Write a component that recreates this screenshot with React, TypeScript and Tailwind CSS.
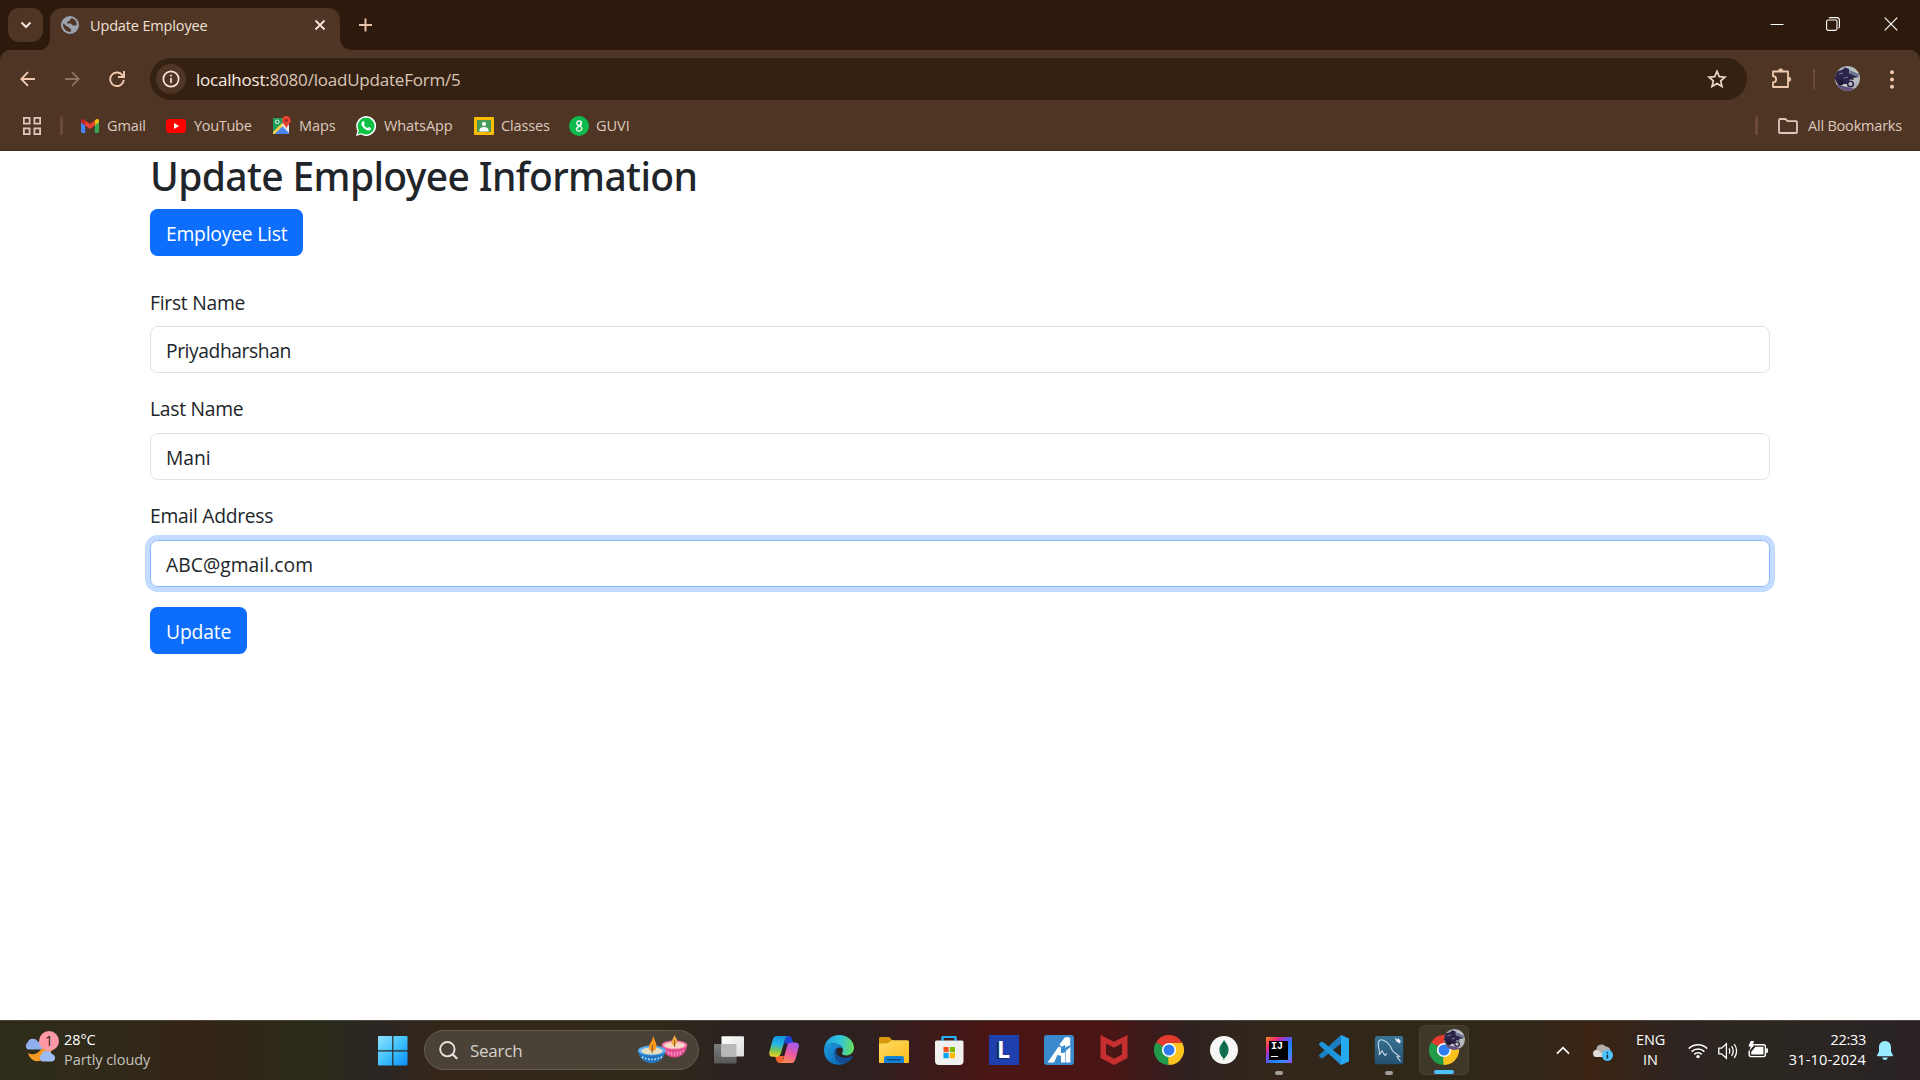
import React from "react";

type IconProps = { className?: string };

/* ---------- Browser icons ---------- */

const Globe = () => (
  <svg className="size-[18px]" viewBox="0 0 18 18">
    <circle cx="9" cy="9" r="9" fill="#9aa3ae" />
    <path
      d="M2 7.2 C1.6 12 5 16 9.4 16 L10.2 14 C10.2 12.6 8.6 12.6 8.2 11.8 C8 10.8 6 11 5.4 10 C4.6 8.8 3.2 8.2 2 7.2 Z M11 2.2 C9 2.6 8.6 4 8.8 5 L6.4 5.6 L6 7.4 L10 7.6 L12 9.4 L15.4 9.6 C16.4 6.4 14.4 3.2 11 2.2 Z"
      fill="#4e3524"
    />
  </svg>
);

const Gmail = () => (
  <svg className="h-[14px] w-[18px]" viewBox="0 0 18 14">
    <path d="M0 2 V12.6 Q0 14 1.4 14 H4.2 V6.2 Z" fill="#4285f4" />
    <path d="M18 2 V12.6 Q18 14 16.6 14 H13.8 V6.2 Z" fill="#34a853" />
    <path d="M13.8 1.6 V6.4 L18 3.3 V1.8 C18 0 16 -.5 14.8.6 Z" fill="#fbbc04" />
    <path d="M4.2 1.6 V6.4 L0 3.3 V1.8 C0 0 2 -.5 3.2.6 Z" fill="#c5221f" />
    <path d="M4.2 1.4 V6.4 L9 10 L13.8 6.4 V1.4 L9 5 Z" fill="#ea4335" />
  </svg>
);

const YouTube = () => (
  <svg className="h-[14px] w-5" viewBox="0 0 20 14">
    <rect width="20" height="14" rx="3.4" fill="#f00" />
    <path d="M8 4 L13 7 L8 10 Z" fill="#fff" />
  </svg>
);

const Maps = () => (
  <svg className="h-[19px] w-[18px]" viewBox="0 0 18 19">
    <path d="M1.2 2 H12 L16 6 V18 H1.2 Q0 18 0 17 V3 Q0 2 1.2 2 Z" fill="#dfe3e6" />
    <path d="M1.2 2 H11 L10 8 L0 17 V3 Q0 2 1.2 2 Z" fill="#1e9e5a" />
    <path d="M1 18 L9 10 L16 17 V18 Z" fill="#4a86f0" />
    <path d="M0 16 L9 7 L11 9 L1.6 18 H0 Z" fill="#fbd14a" />
    <path d="M9 9 L16 16 V10 L12 7 Z" fill="#e8eaed" />
    <circle cx="4.2" cy="5.8" r="1.8" fill="none" stroke="#fff" strokeWidth=".9" />
    <path d="M13.4 0 A4.4 4.4 0 0 0 9 4.4 C9 7.4 12.4 8.6 13.4 12.6 C14.4 8.6 17.8 7.4 17.8 4.4 A4.4 4.4 0 0 0 13.4 0 Z" fill="#ea4335" />
    <circle cx="13.4" cy="4.4" r="1.6" fill="#9b2a20" />
  </svg>
);

const WhatsApp = () => (
  <svg className="size-5" viewBox="0 0 20 20">
    <path d="M0 20 L1.4 14.8 A10 9.9 0 1 1 5.2 18.6 Z" fill="#fff" />
    <path d="M1.9 18.1 L2.9 14.5 A8.4 8.4 0 1 1 5.6 17.2 Z" fill="#0cc143" />
    <path d="M6.9 5.2 C7.4 5 7.8 5.1 8 5.6 L8.7 7.2 C8.9 7.7 8.1 8.3 7.9 8.7 C8.6 10.2 9.9 11.4 11.5 12.1 C12 11.8 12.5 10.8 13 11 L14.8 11.9 C15.4 12.3 14.7 13.7 14.1 14.1 C12.9 14.9 11 14.4 9.2 13.2 C7.5 12.1 5.9 10 5.5 8.4 C5.2 7.1 6 5.6 6.9 5.2 Z" fill="#fff" />
  </svg>
);

const Classroom = () => (
  <svg className="h-[18px] w-5" viewBox="0 0 20 18">
    <rect width="20" height="18" rx="1" fill="#fbbc04" />
    <rect x="3" y="3" width="14" height="12" fill="#4a9a5b" />
    <circle cx="10" cy="7" r="2" fill="#fff" />
    <path d="M5.4 14.4 V13 C5.4 11 8 10 10 10 S14.6 11 14.6 13 V14.4 Z" fill="#fff" />
    <rect x="11" y="15" width="4" height="1.4" fill="#e8a000" />
  </svg>
);

const Guvi = () => (
  <svg className="size-5" viewBox="0 0 20 20" fill="none">
    <circle cx="10" cy="10" r="10" fill="#0fba4c" />
    <circle cx="10" cy="7" r="2.2" stroke="#fff" strokeWidth="1.3" />
    <path d="M12.2 5.6 V8 C12.2 9.8 10.6 10.2 8.6 10.2 M10.6 10.4 C12.8 10.8 13.2 12 12.6 13.4 C11.9 15.7 8 15.7 7.4 13.2 C7.2 12 8 11.4 9.2 11.8" stroke="#fff" strokeWidth="1.3" strokeLinecap="round" />
  </svg>
);

const Biker = ({ className }: IconProps) => (
  <svg className={className} viewBox="0 0 25 25">
    <defs>
      <clipPath id="avatarClip"><circle cx="12.5" cy="12.5" r="12.5" /></clipPath>
      <linearGradient id="avatarSky" x1="0" y1="0" x2="1" y2="1">
        <stop offset="0" stopColor="#9aa3b4" />
        <stop offset=".6" stopColor="#c3cac6" />
        <stop offset="1" stopColor="#9d9aa8" />
      </linearGradient>
    </defs>
    <g clipPath="url(#avatarClip)">
      <rect width="25" height="25" fill="url(#avatarSky)" />
      <path d="M0 18 L8 20 L20 23 V25 H0 Z" fill="#66527f" />
      <path d="M0 6 L7 4 L10 1.5 L14 3 L14 7 L19 9 L24 11 L18 12 L19 14 L15 13.5 L12 18 L7 18 L2 17 L0 13 Z" fill="#2c2348" />
      <path d="M14 4 L24 8 L23 11 L15 8 Z" fill="#6b7290" />
      <circle cx="5.5" cy="16.5" r="3" fill="#1e1934" />
      <circle cx="15.5" cy="18" r="2.8" fill="none" stroke="#2c2348" strokeWidth="1.5" />
      <path d="M4 8 L8 7 M9 12 L13 11" stroke="#77779a" strokeWidth="1.2" />
    </g>
  </svg>
);

/* ---------- Browser chrome ---------- */

const bookmarks = [
  { label: "Gmail", icon: <Gmail />, cls: "w-[85px] gap-[8px]", text: "tracking-[-0.1px]" },
  { label: "YouTube", icon: <YouTube />, cls: "w-[107px] gap-[8px]", text: "tracking-[-0.3px]" },
  { label: "Maps", icon: <Maps />, cls: "w-[83px] gap-[8px]", text: "tracking-[-0.1px]" },
  { label: "WhatsApp", icon: <WhatsApp />, cls: "w-[118px] gap-[8px]", text: "tracking-[-0.1px]" },
  { label: "Classes", icon: <Classroom />, cls: "w-[95px] gap-[7px]", text: "tracking-[-0.15px]" },
  { label: "GUVI", icon: <Guvi />, cls: "gap-[7px]", text: "" },
];

function TabStrip() {
  return (
    <div className="flex h-[50px] bg-[#2e1a0c]">
      <div className="ml-2 mt-2 flex h-[34px] w-[35px] items-center justify-center rounded-[11px] bg-[#4e3524]">
        <svg className="size-[12px]" viewBox="0 0 12 12" fill="none" stroke="#f5e5db" strokeWidth="2">
          <path d="M1.5 3.5 L6 8 L10.5 3.5" />
        </svg>
      </div>
      <svg className="mt-[38px] h-3 w-[7px]" viewBox="0 0 7 12">
        <path d="M7 0 V12 H0 V11.4 C4 10 7 5 7 0 Z" fill="#4e3524" />
      </svg>
      <div className="mt-2 flex h-[42px] w-[290px] items-center rounded-t-[12px] bg-[#4e3524] pb-[8px] pl-[11px] pr-[14px]">
        <Globe />
        <span className="ml-[11px] flex-1 pt-[2px] text-[14.5px] leading-5 tracking-[-0.15px] text-[#f0e0d6]">Update Employee</span>
        <svg className="size-[12px]" viewBox="0 0 12 12" stroke="#f5e5db" strokeWidth="1.8">
          <path d="M1.5 1.5 L10.5 10.5 M10.5 1.5 L1.5 10.5" />
        </svg>
      </div>
      <svg className="mt-[38px] size-3" viewBox="0 0 12 12">
        <path d="M0 0 V12 H12 C5 12 0 7 0 0 Z" fill="#4e3524" />
      </svg>
      <svg className="ml-[6px] mt-[18px] size-[14px]" viewBox="0 0 14 14" stroke="#e9c3a8" strokeWidth="1.9">
        <path d="M7.5 .5 V13.5 M1 7 H14" />
      </svg>
      <div className="flex flex-1 justify-end pr-[22px] pt-[17px] text-white">
        <svg className="mr-[42px] size-[14px]" viewBox="0 0 14 14" stroke="currentColor"><path d="M.5 7.5 H13.5" /></svg>
        <svg className="mr-[44px] size-[14px]" viewBox="0 0 14 14" fill="none" stroke="currentColor" strokeWidth="1.1">
          <rect x=".6" y="3" width="10.4" height="10.4" rx="1.6" />
          <path d="M3 1.2 Q3.6 .6 4.6 .6 H10.6 Q13.4 .6 13.4 3.4 V9.4 Q13.4 10.6 12.6 11.2" />
        </svg>
        <svg className="size-[14px]" viewBox="0 0 14 14" stroke="currentColor" strokeWidth="1.2"><path d="M.7 .7 L13.3 13.3 M13.3 .7 L.7 13.3" /></svg>
      </div>
    </div>
  );
}

function AddressBar() {
  return (
    <div className="flex h-[58px] items-center rounded-t-[10px] bg-[#4e3524]">
      <svg className="ml-5 size-[16px]" viewBox="0 0 16 16" fill="none" stroke="#f0c9ae" strokeWidth="1.8">
        <path d="M15 8 H1.5 M8 1.2 L1.3 8 L8 14.8" />
      </svg>
      <svg className="ml-[28px] size-[16px]" viewBox="0 0 16 16" fill="none" stroke="#8e7261" strokeWidth="1.8">
        <path d="M1 8 H14.5 M8 1.2 L14.7 8 L8 14.8" />
      </svg>
      <svg className="ml-[29px] size-[16px]" viewBox="0 0 16 16" fill="none" stroke="#f0c9ae" strokeWidth="1.9">
        <path d="M14.8 8.8 A6.8 6.8 0 1 1 13 3.6 L14.6 5.6" />
        <path d="M15 0 V6 H9" />
      </svg>
      <div className="ml-[25px] flex h-[42px] w-[1597px] items-center rounded-full bg-[#352111] pl-[6px] pr-[20px]">
        <div className="flex size-[30px] items-center justify-center rounded-full bg-[#4e3524]">
          <svg className="size-[18px]" viewBox="0 0 18 18" fill="none" stroke="#f5e5db" strokeWidth="1.7">
            <circle cx="9" cy="9" r="7.7" />
            <path d="M9 8 V13 M9 4.7 V6.5" />
          </svg>
        </div>
        <span className="ml-[10px] flex-1 pt-[2px] text-[17px] leading-6 tracking-[-0.21px] text-[#d8c5b8]">
          <span className="text-[#f8ebe2]">localhost:</span>8080/loadUpdateForm/5
        </span>
        <svg className="size-[20px]" viewBox="0 0 20 20" fill="none" stroke="#ead6c8" strokeWidth="1.7">
          <path d="M10 2.4 L12.3 7.6 L18 8.1 L13.7 11.9 L15 17.5 L10 14.5 L5 17.5 L6.3 11.9 L2 8.1 L7.7 7.6 Z" />
        </svg>
      </div>
      <svg className="ml-[24px] size-[22px]" viewBox="0 0 22 22" fill="none" stroke="#f0c9ae" strokeWidth="1.8" strokeLinejoin="round">
        <path d="M2 3.5 H17 V19 H2 V14.5 C6.2 14.2 6.2 8.4 2 8 Z" />
        <path d="M7.4 3 A2.3 2.3 0 0 1 12 3 Z M17.6 9 A2.3 2.3 0 0 1 17.6 13.6 Z" fill="#f0c9ae" strokeWidth=".6" />
      </svg>
      <div className="ml-[20px] h-5 w-[2px] bg-[#6b4b36]" />
      <Biker className="mb-[2px] ml-[20px] size-[25px]" />
      <svg className="ml-[30px] h-[19px] w-1" viewBox="0 0 4 19" fill="#f0c9ae">
        <circle cx="2" cy="2.2" r="2" /><circle cx="2" cy="9.5" r="2" /><circle cx="2" cy="16.8" r="2" />
      </svg>
    </div>
  );
}

function BookmarkBar() {
  return (
    <div className="flex h-[43px] items-center border-b border-[#442c1c] bg-[#4e3524] pb-[7px] text-[14.5px] leading-5 text-[#dccabe]">
      <svg className="ml-[23px] size-[18px]" viewBox="0 0 18 18" fill="none" stroke="#dcc8bb" strokeWidth="1.8">
        <rect x=".9" y=".9" width="5.7" height="5.7" /><rect x="11.4" y=".9" width="5.7" height="5.7" />
        <rect x=".9" y="11.4" width="5.7" height="5.7" /><rect x="11.4" y="11.4" width="5.7" height="5.7" />
      </svg>
      <div className="ml-[19px] mr-[18px] h-[19px] w-[3px] rounded bg-[#6b4b36]" />
      {bookmarks.map((b) => (
        <div key={b.label} className={`flex shrink-0 items-center ${b.cls}`}>
          {b.icon}
          <span className={b.text}>{b.label}</span>
        </div>
      ))}
      <div className="ml-auto mr-[20px] h-[19px] w-[3px] rounded bg-[#6b4b36]" />
      <svg className="h-4 w-5" viewBox="0 0 20 16" fill="none" stroke="#dcc8bb" strokeWidth="1.8" strokeLinejoin="round">
        <path d="M1 2 Q1 1 2 1 H7.4 L9.6 3.2 H18 Q19 3.2 19 4.2 V14 Q19 15 18 15 H2 Q1 15 1 14 Z" />
      </svg>
      <span className="ml-[10px] mr-[18px] tracking-[-0.2px]">All Bookmarks</span>
    </div>
  );
}

/* ---------- Page ---------- */

const inputBase = "flex h-[47px] items-center rounded-[7.5px] border px-[15px] pt-[2px]";
const button = "flex h-[47px] items-center rounded-[7.5px] bg-[#0d6efd] pl-4 pt-[2px] text-white";

function Page() {
  return (
    <main className="h-[869px] bg-white px-[150px] text-[19.25px] leading-[30px] text-[#212529]">
      <h1 className="h-[58px] pt-px font-['Noto_Sans'] text-[39px] font-medium leading-[48px] tracking-[-0.63px]">Update Employee Information</h1>
      <button className={`${button} w-[153px] tracking-[-0.2px]`}>Employee List</button>
      <div className="pb-[8px] pt-[32px] tracking-[-0.25px]">First Name</div>
      <div className={`${inputBase} border-[#dee2e6] tracking-[-0.42px]`}>Priyadharshan</div>
      <div className="pb-[9px] pt-[21px] tracking-[-0.25px]">Last Name</div>
      <div className={`${inputBase} border-[#dee2e6]`}>Mani</div>
      <div className="pb-[9px] pt-[21px] tracking-[-0.27px]">Email Address</div>
      <div className={`${inputBase} border-[#86b7fe] tracking-[0.05px] shadow-[0_0_0_5px_#c2dbfe]`}>ABC@gmail.com</div>
      <button className={`${button} mt-5 w-[97px] tracking-[-0.12px]`}>Update</button>
    </main>
  );
}

/* ---------- Taskbar icons ---------- */

const Windows = () => (
  <svg className="size-[30px]" viewBox="0 0 30 30">
    <defs>
      <linearGradient id="win" x1="0" y1="0" x2="1" y2="1">
        <stop offset="0" stopColor="#8fe3ff" /><stop offset=".5" stopColor="#41c2fb" /><stop offset="1" stopColor="#0a8df5" />
      </linearGradient>
    </defs>
    <path d="M0 1 Q0 0 1 0 H14.2 V14.2 H0 Z M15.4 0 H28.5 Q29.5 0 29.5 1 V14.2 H15.4 Z M0 15.4 H14.2 V29.5 H1 Q0 29.5 0 28.5 Z M15.4 15.4 H29.5 V28.5 Q29.5 29.5 28.5 29.5 H15.4 Z" fill="url(#win)" />
  </svg>
);

const Diyas = () => (
  <svg className="h-[30px] w-[50px]" viewBox="0 0 50 30">
    <path d="M24 9 C24 27 49 27 49 9 Z" fill="#e2488f" />
    <ellipse cx="36.5" cy="10" rx="12.8" ry="4.6" fill="#f26fae" />
    <ellipse cx="36.5" cy="10.3" rx="10.6" ry="3.3" fill="#f8d9c8" />
    <path d="M36 0 C38 3 40 5 39 8 C38 11 34 11 33.5 8 C33 5 36 4 36 0 Z" fill="#f6a945" />
    <path d="M36.6 5 L36.6 12" stroke="#8a6030" strokeWidth="1" />
    <path d="M27 15.5 Q36.5 20.5 46 15.5 M30 18.5 Q36.5 21.5 43 18.5" stroke="#ffc4e0" strokeWidth="1.1" strokeDasharray="1.5 1.5" fill="none" />
    <path d="M0 15 C1 32.5 26 32.5 27.5 15 Z" fill="#2575bd" />
    <ellipse cx="13.8" cy="15.5" rx="13.8" ry="5" fill="#58aef0" />
    <ellipse cx="13.8" cy="16" rx="11" ry="3.5" fill="#e5dfbf" />
    <path d="M15 1 C17 6 19.5 9 18 13.5 C17 17 12 17 11 13.5 C10 9 15 7 15 1 Z" fill="#ff9a1f" />
    <path d="M14.6 10 L14 18" stroke="#6d5630" strokeWidth="1" />
    <path d="M4 22 Q13.8 27 24 22" stroke="#bfe3ff" strokeWidth="1.6" strokeDasharray="1.6 1.6" fill="none" />
  </svg>
);

const TaskView = () => (
  <svg className="size-[30px]" viewBox="0 0 30 30">
    <defs>
      <linearGradient id="tvw" x1="0" y1="0" x2="1" y2="1"><stop offset="0" stopColor="#fff" /><stop offset="1" stopColor="#dcdcdc" /></linearGradient>
      <linearGradient id="tvg" x1="0" y1="0" x2="0" y2="1"><stop offset="0" stopColor="#7c7c7c" /><stop offset="1" stopColor="#585858" /></linearGradient>
    </defs>
    <rect x="0" y="9" width="22.5" height="19.5" rx="1" fill="url(#tvg)" />
    <rect x="7.5" y="1.2" width="22.5" height="20.3" rx="1" fill="url(#tvw)" />
    <rect x="7.5" y="9" width="15" height="12.5" fill="#b9b9b9" />
  </svg>
);

const Copilot = () => (
  <svg className="size-[30px]" viewBox="0 0 30 30">
    <defs>
      <linearGradient id="cpa" x1=".4" y1="0" x2=".3" y2="1"><stop offset="0" stopColor="#1493dc" /><stop offset=".4" stopColor="#26b8e6" /><stop offset=".7" stopColor="#7cc651" /><stop offset="1" stopColor="#f3d021" /></linearGradient>
      <linearGradient id="cpb" x1=".7" y1="0" x2=".3" y2="1"><stop offset="0" stopColor="#a45cf0" /><stop offset=".5" stopColor="#e958a4" /><stop offset="1" stopColor="#ff8a4c" /></linearGradient>
    </defs>
    <path d="M17 1 H20 Q22.4 1 23 3.8 L24.4 8.5 H15 Z" fill="#1b45d8" />
    <path d="M13 28 H10 Q8 28 7.2 25 L6 21 H15 Z" fill="#f3632f" />
    <path d="M7.6 1 H19.5 C17 1 16.2 3.4 15.6 5.4 L12 18 C11.2 20.6 10 21.8 7.6 21.8 H3.6 C.6 21.8-.3 19.4.5 16.6 L3.6 5 C4.4 2.4 5.4 1 7.6 1 Z" fill="url(#cpa)" />
    <path d="M22.6 28 H10.6 C13.2 28 14 25.6 14.6 23.6 L18 11.4 C18.8 8.6 20 7.6 22.4 7.6 H26.4 C29.4 7.6 30.5 10 29.6 12.8 L26.5 24 C25.8 26.8 24.6 28 22.6 28 Z" fill="url(#cpb)" />
  </svg>
);

const Edge = () => (
  <svg className="size-[30px]" viewBox="0 0 30 30">
    <defs>
      <linearGradient id="eg1" x1="0" y1=".4" x2="1" y2=".5"><stop offset="0" stopColor="#1f9fe0" /><stop offset=".5" stopColor="#2fc3df" /><stop offset="1" stopColor="#67df5c" /></linearGradient>
      <linearGradient id="eg2" x1="0" y1="0" x2="1" y2="1"><stop offset="0" stopColor="#1c9de0" /><stop offset="1" stopColor="#0a5fae" /></linearGradient>
    </defs>
    <path d="M.2 13 C1.4 5.4 7.4 0 15 0 C23.6 0 30 6 30 12.6 C30 17.6 26.4 20.4 22.4 20.4 C19.6 20.4 18 19.4 18 18.4 C18 17.6 19 17 19 15 C19 11 14 8.6 9.6 8.6 C5 8.6 1.8 10.6 .2 13 Z" fill="url(#eg1)" />
    <path d="M0 15 C0 10.4 4.6 8.4 9.6 8.6 C15 8.8 19 11.4 19 15 C17 10.4 10.6 12.6 10.6 18.6 C10.6 25 16 29 21 28.6 C13 32 0 28.4 0 15 Z" fill="url(#eg2)" />
    <path d="M13.4 12.6 C8.6 16 9.8 26.6 19.6 28.8 C24 28 27.4 24.6 28.6 22 C28.8 21.4 28.2 21 27.6 21.4 C21.4 24.4 13.4 22.2 12.4 17.4 C12 15.4 12.6 13.6 13.4 12.6 Z" fill="#124f94" />
  </svg>
);

const Explorer = () => (
  <svg className="size-[30px]" viewBox="0 0 30 30">
    <defs><linearGradient id="fld" x1="0" y1="0" x2="1" y2="1"><stop offset="0" stopColor="#ffdb66" /><stop offset="1" stopColor="#fdbc18" /></linearGradient></defs>
    <path d="M0 3.5 Q0 2 1.5 2 H9 Q10.5 2 11.5 3.2 L13 5 H15 V12 H0 Z" fill="#d9980d" />
    <path d="M0 8.5 Q8 8.8 10 7.4 L12 5.8 Q12.8 5.3 14 5.3 H28.5 Q30 5.3 30 6.8 V27 Q30 28 29 28 H1 Q0 28 0 27 Z" fill="url(#fld)" />
    <path d="M5 28 V23.3 Q5 21 7.3 21 H22.7 Q25 21 25 23.3 V28 Z" fill="#1583d3" />
    <rect x="8" y="24" width="14" height="1.5" rx=".7" fill="#0b4c8b" />
  </svg>
);

const Store = () => (
  <svg className="size-[30px]" viewBox="0 0 30 30">
    <path d="M8.5 8 V2 H21.5 V8" fill="none" stroke="#22b3f2" strokeWidth="2" />
    <path d="M1 7 Q1 5.5 2.5 5.5 H28 Q29.5 5.5 29.5 7 V26 Q29.5 30 25.5 30 H5 Q1 30 1 26 Z" fill="#f0f0f0" />
    <path d="M8.5 5.5 V3 M21.5 5.5 V3" stroke="#22b3f2" strokeWidth="2" />
    <path d="M9.5 12 H14.7 V17.2 H9.5 Z" fill="#f25022" /><path d="M15.8 12 H21 V17.2 H15.8 Z" fill="#7fba00" />
    <path d="M9.5 18 H14.7 V23.2 H9.5 Z" fill="#00a4ef" /><path d="M15.8 18 H21 V23.2 H15.8 Z" fill="#ffb900" />
  </svg>
);

const LIcon = () => (
  <div className="flex size-[30px] items-center justify-center bg-[#1f3fae] pb-[2px] font-['Open_Sans'] text-[23px] font-bold leading-none text-white [text-shadow:-2px_1px_0_#0d2a55]">
    L
  </div>
);

const AiIcon = () => (
  <svg className="size-[30px]" viewBox="0 0 30 30">
    <rect width="30" height="30" rx="3" fill="#3a8bcd" />
    <path d="M15.5 9.5 L20.5 2.8 Q23 1.2 26.2 3 V10.6 L22.6 11.4 L20 15 H16.4 L17.8 12.6 Z" fill="#fff" />
    <path d="M3.6 27.6 L14.6 11.4 L17 12.6 V19 L14 18.8 L10 27.6 Z M12.6 19.4 L21 17 V27.6 H17 V21 Z M21.6 16 L26.4 12 V27.6 H21.6 Z" fill="#fff" />
    <path d="M17 12 L21 10 L22 17 L17 18 Z" fill="#3a8bcd" />
  </svg>
);

const McAfee = () => (
  <svg className="size-[30px]" viewBox="0 0 30 30">
    <path d="M1.5 0 L15 6.8 L28.5 0 V23 L15 30 L1.5 23 Z M7 8.6 V19.6 L15 23.7 L23 19.6 V8.6 L15 12.8 Z" fill="#c72f2f" fillRule="evenodd" />
  </svg>
);

const Chrome = () => (
  <svg className="size-[30px]" viewBox="0 0 30 30">
    <path d="M15 15 L2 7.5 A15 15 0 0 1 28 7.5 L28.1 8 H15 Z" fill="#e33b2e" />
    <path d="M15 15 L28 7.5 A15 15 0 0 1 15 30 L14.6 30 Z" fill="#fcc31e" />
    <path d="M15 15 L15 30 A15 15 0 0 1 2 7.5 Z" fill="#219a4c" />
    <path d="M15 8 H28.1 L27 10 L21 18.6 Z" fill="#fcc31e" />
    <path d="M21 18.6 L14.8 30 L14 23 Z" fill="#fcc31e" />
    <path d="M2 7.5 L9 18.6 L10 12 Z" fill="#219a4c" />
    <circle cx="15" cy="15" r="7.1" fill="#fff" />
    <circle cx="15" cy="15" r="5.5" fill="#2f7cf0" />
  </svg>
);

const Mongo = () => (
  <svg className="size-[30px]" viewBox="0 0 30 30">
    <circle cx="15" cy="15" r="14" fill="#f6f6f4" />
    <path d="M15 5 C17 8 19.6 10.4 19.6 15 C19.6 19 17.4 21.6 15.4 23.2 L15.2 25 H14.6 L14.4 23.2 C12.4 21.4 10.4 19 10.4 15 C10.4 10.4 13.6 8 15 5 Z" fill="#10734f" />
    <path d="M15 7 V23" stroke="#0a5238" strokeWidth=".8" />
  </svg>
);

const IntelliJ = () => (
  <div className="flex size-[26px] items-center justify-center bg-[linear-gradient(135deg,#ff8a1f_0%,#f22d6d_22%,#8a3fe0_38%,#1f7cf5_60%,#3a8cf8_80%,#9a4be8_100%)]">
    <div className="flex size-[19px] flex-col bg-black pl-[2px] pt-[1px] font-['Liberation_Mono'] text-[10px] font-bold leading-[10px] text-white">
      IJ
      <span className="mt-[4px] h-[1.5px] w-[7px] bg-white" />
    </div>
  </div>
);

const VSCode = () => (
  <svg className="size-[30px]" viewBox="0 0 30 30">
    <path d="M22 0 L30 3.6 V26.4 L22 30 Z" fill="#27a9f0" />
    <path d="M22 0 V8.4 L4 23 Q3 23.6 2 23 L.4 21.4 Q-.4 20.4.6 19.4 Z" fill="#1b7fc4" />
    <path d="M22 30 V21.6 L4 7 Q3 6.4 2 7 L.4 8.6 Q-.4 9.6.6 10.6 Z" fill="#1f95dc" />
  </svg>
);

const MySQL = () => (
  <svg className="size-[30px]" viewBox="0 0 30 30" fill="none">
    <defs><linearGradient id="mys" x1="0" y1="0" x2="0" y2="1"><stop offset="0" stopColor="#3a7394" /><stop offset="1" stopColor="#24506f" /></linearGradient></defs>
    <rect x=".8" y=".9" width="28.4" height="28.4" rx="2.5" fill="url(#mys)" />
    <path d="M5 20 C6.6 17 4.4 14 4.2 9.6 C4 5 6.4 3.8 10 5.6 C15 8 16.4 11 18.4 15.4 C19.4 18 24 19.6 25.6 21.6 L23 22 L26.6 26.4 M5 20 L8 16 L11 20.6 L13 18.4" stroke="#c8dce8" strokeWidth="1.1" />
    <path d="M20.6 2.4 L23.4 4.6 L24 3 L26.8 6 L26 8.6 L22.4 6.4 Z" fill="#e8f2f8" />
  </svg>
);

const apps: { name: string; icon: React.ReactNode; mark?: boolean }[] = [
  { name: "taskview", icon: <TaskView /> },
  { name: "copilot", icon: <Copilot /> },
  { name: "edge", icon: <Edge /> },
  { name: "explorer", icon: <Explorer /> },
  { name: "store", icon: <Store /> },
  { name: "l", icon: <LIcon /> },
  { name: "ai", icon: <AiIcon /> },
  { name: "mcafee", icon: <McAfee /> },
  { name: "chrome", icon: <Chrome /> },
  { name: "mongo", icon: <Mongo /> },
  { name: "intellij", icon: <IntelliJ />, mark: true },
  { name: "vscode", icon: <VSCode /> },
  { name: "mysql", icon: <MySQL />, mark: true },
];

function Weather() {
  return (
    <div className="flex w-[377px] items-center pb-[2px] pl-[25px]">
      <div className="relative h-[36px] w-[34px]">
        <svg className="mt-[5px] h-[30px] w-[34px]" viewBox="2 0 34 30">
          <path d="M29.6 4 C31.6 16 22 24.6 14 24.2 C9 24 6 20 5 16 C12 20 20 14 21 4 Z" fill="#f59a22" />
          <path d="M6 11.5 A4 4 0 0 1 5.6 4.6 A5.6 5.6 0 0 1 16 4 A3.8 3.8 0 0 1 19 11.5 Z" fill="#8fb0ec" transform="translate(-1 1)" />
          <path d="M18 26.5 A4 4 0 0 1 17.5 19.4 A5.6 5.6 0 0 1 27.9 19 A3.9 3.9 0 0 1 28.5 26.5 Z" fill="#9dbcf2" transform="translate(1 -2)" />
        </svg>
        <span className="absolute left-[14px] top-[-1px] flex size-5 items-center justify-center rounded-full bg-[#fd99a4] text-[14px] leading-none text-[#2b2020]">1</span>
      </div>
      <div className="ml-[5px] text-[14.5px] leading-5 text-white">
        <div className="tracking-[-0.1px]">28°C</div>
        <div className="tracking-[-0.05px] text-[#c4c2bd]">Partly cloudy</div>
      </div>
    </div>
  );
}

function Tray() {
  return (
    <div className="ml-auto flex items-center text-[14.5px] leading-[20px] text-white">
      <svg className="mr-[23px] h-[9px] w-[14px]" viewBox="0 0 14 9" fill="none" stroke="#fff" strokeWidth="1.6"><path d="M1 7.6 L7 1.6 L13 7.6" /></svg>
      <svg className="mr-[23px] mt-[4px] h-[17px] w-[20px]" viewBox="0 0 20 17">
        <path d="M3.6 13 A3.6 3.6 0 0 1 3.4 5.8 A5.2 5.2 0 0 1 12.6 2.4 A4.6 4.6 0 0 1 17 9 L12 13 Z" fill="#b4afac" />
        <path d="M3.6 13 A3.6 3.6 0 0 1 2 6.4 C6 5 8 9 12 13 Z" fill="#dedbd8" />
        <circle cx="14.4" cy="11.3" r="5.6" fill="#50c3fb" />
        <path d="M14.4 10.4 V14.4 M14.4 7.9 V9.3" stroke="#0d2b45" strokeWidth="1.5" />
      </svg>
      <div className="w-[29px] pb-px text-center"><div className="tracking-[-0.1px]">ENG</div><div>IN</div></div>
      <svg className="ml-[23px] h-[16px] w-[20px]" viewBox="0 0 20 16" fill="none" stroke="#fff" strokeWidth="1.5">
        <path d="M.8 5.6 A13 13 0 0 1 19.2 5.6 M3.6 8.6 A9 9 0 0 1 16.4 8.6 M6.3 11.4 A5.2 5.2 0 0 1 13.7 11.4" />
        <circle cx="10" cy="13.6" r="1.7" fill="#fff" stroke="none" />
      </svg>
      <svg className="ml-[10px] h-[18px] w-[20px]" viewBox="0 0 20 18" fill="none" stroke="#fff" strokeWidth="1.3">
        <path d="M.8 6.2 H3.6 L8.4 1.8 V16.2 L3.6 11.8 H.8 Z M11 6.4 Q12.6 9 11 11.6 M13.6 4.2 Q16.8 9 13.6 13.8 M16.2 2 Q21 9 16.2 16" />
      </svg>
      <svg className="mb-[2px] ml-[10px] h-[18px] w-[20px]" viewBox="0 0 20 18">
        <path d="M6.6 3.8 H15.6 Q17.4 3.8 17.4 5.6 V13.6 Q17.4 15.6 15.6 15.6 H3 Q1.2 15.6 1.2 13.6 V9.6" fill="none" stroke="#fff" strokeWidth="1.4" />
        <path d="M7.4 5.8 H15.4 V13.6 H3.2 V11 Z M18.2 7.2 H19 Q20 7.2 20 8.4 V10.6 Q20 12 19 12 H18.2 Z" fill="#fff" />
        <path d="M2.6 0 H6 L5 3 H7.2 L1.6 9.6 L2.6 5.4 H.4 Z" fill="#fff" />
      </svg>
      <div className="ml-[17px] w-[81px] pb-[2px] text-right"><div className="tracking-[-0.3px]">22:33</div><div className="tracking-[0.15px]">31-10-2024</div></div>
      <svg className="ml-[11px] mr-[27px] h-[19px] w-[16px]" viewBox="0 0 16 19" fill="#99ebff">
        <path d="M8 0 C4.4 0 2 2.8 2 6 V10.4 L0 14.2 Q0 15.2 1 15.2 H15 Q16 15.2 16 14.2 L14 10.4 V6 C14 2.8 11.6 0 8 0 Z M5.2 16.4 H10.8 Q10.4 19 8 19 T5.2 16.4 Z" />
      </svg>
    </div>
  );
}

function Taskbar() {
  return (
    <footer className="flex h-[60px] border-t border-[#4b4740] bg-[linear-gradient(90deg,#2e2c19_0px,#30291a_120px,#342317_190px,#2b2a19_300px,#2a2a1b_330px,#2a2623_380px,#35261a_440px,#302a18_650px,#2b2221_730px,#2d2120_860px,#4a1515_990px,#4a1515_1110px,#2e2220_1190px,#33261a_1270px,#2e2818_1450px,#33261a_1540px,#3c2413_1590px,#2d2421_1680px,#2b2720_1760px,#2a2226_1920px)]">
      <Weather />
      <div className="flex w-[47px] items-center pl-px"><Windows /></div>
      <div className="mt-[9px] flex h-10 w-[275px] items-center rounded-full border border-[#665d50] bg-[#4a4236] pl-[14px] pr-[10px]">
        <svg className="size-[19px]" viewBox="0 0 19 19" fill="none" stroke="#e6e3df" strokeWidth="1.9"><circle cx="8.4" cy="8.2" r="7.2" /><path d="M13.6 13.2 L18.2 17.8" strokeWidth="2.2" /></svg>
        <span className="ml-[12px] flex-1 pt-[2px] text-[17px] leading-6 tracking-[-0.25px] text-[#d5d1cb]">Search</span>
        <Diyas />
      </div>
      <div className="flex pl-[2px]">
        {apps.map((a) => (
          <div key={a.name} className="flex w-[55px] flex-col items-center pt-[14px]">
            <div className="flex size-[30px] items-center justify-center">{a.icon}</div>
            {a.mark && <span className="mt-[6px] h-1 w-2 rounded-full bg-[#a19d97]" />}
          </div>
        ))}
        <div className="ml-[3px] mt-1 flex size-[50px] flex-col items-center rounded-[6px] border border-[#4a4235] bg-[#3f3728] pt-[9px]">
          <div className="relative size-[30px]">
            <Chrome />
            <Biker className="absolute -top-[6px] left-[15px] size-[21px]" />
          </div>
          <span className="mt-[5px] h-1 w-5 shrink-0 rounded-full bg-[#4cc2ff]" />
        </div>
      </div>
      <Tray />
    </footer>
  );
}

export default function App() {
  return (
    <div className="flex h-[1080px] w-[1920px] flex-col overflow-hidden bg-[#2e1a0c] font-['Open_Sans',sans-serif]">
      <TabStrip />
      <AddressBar />
      <BookmarkBar />
      <Page />
      <Taskbar />
    </div>
  );
}
